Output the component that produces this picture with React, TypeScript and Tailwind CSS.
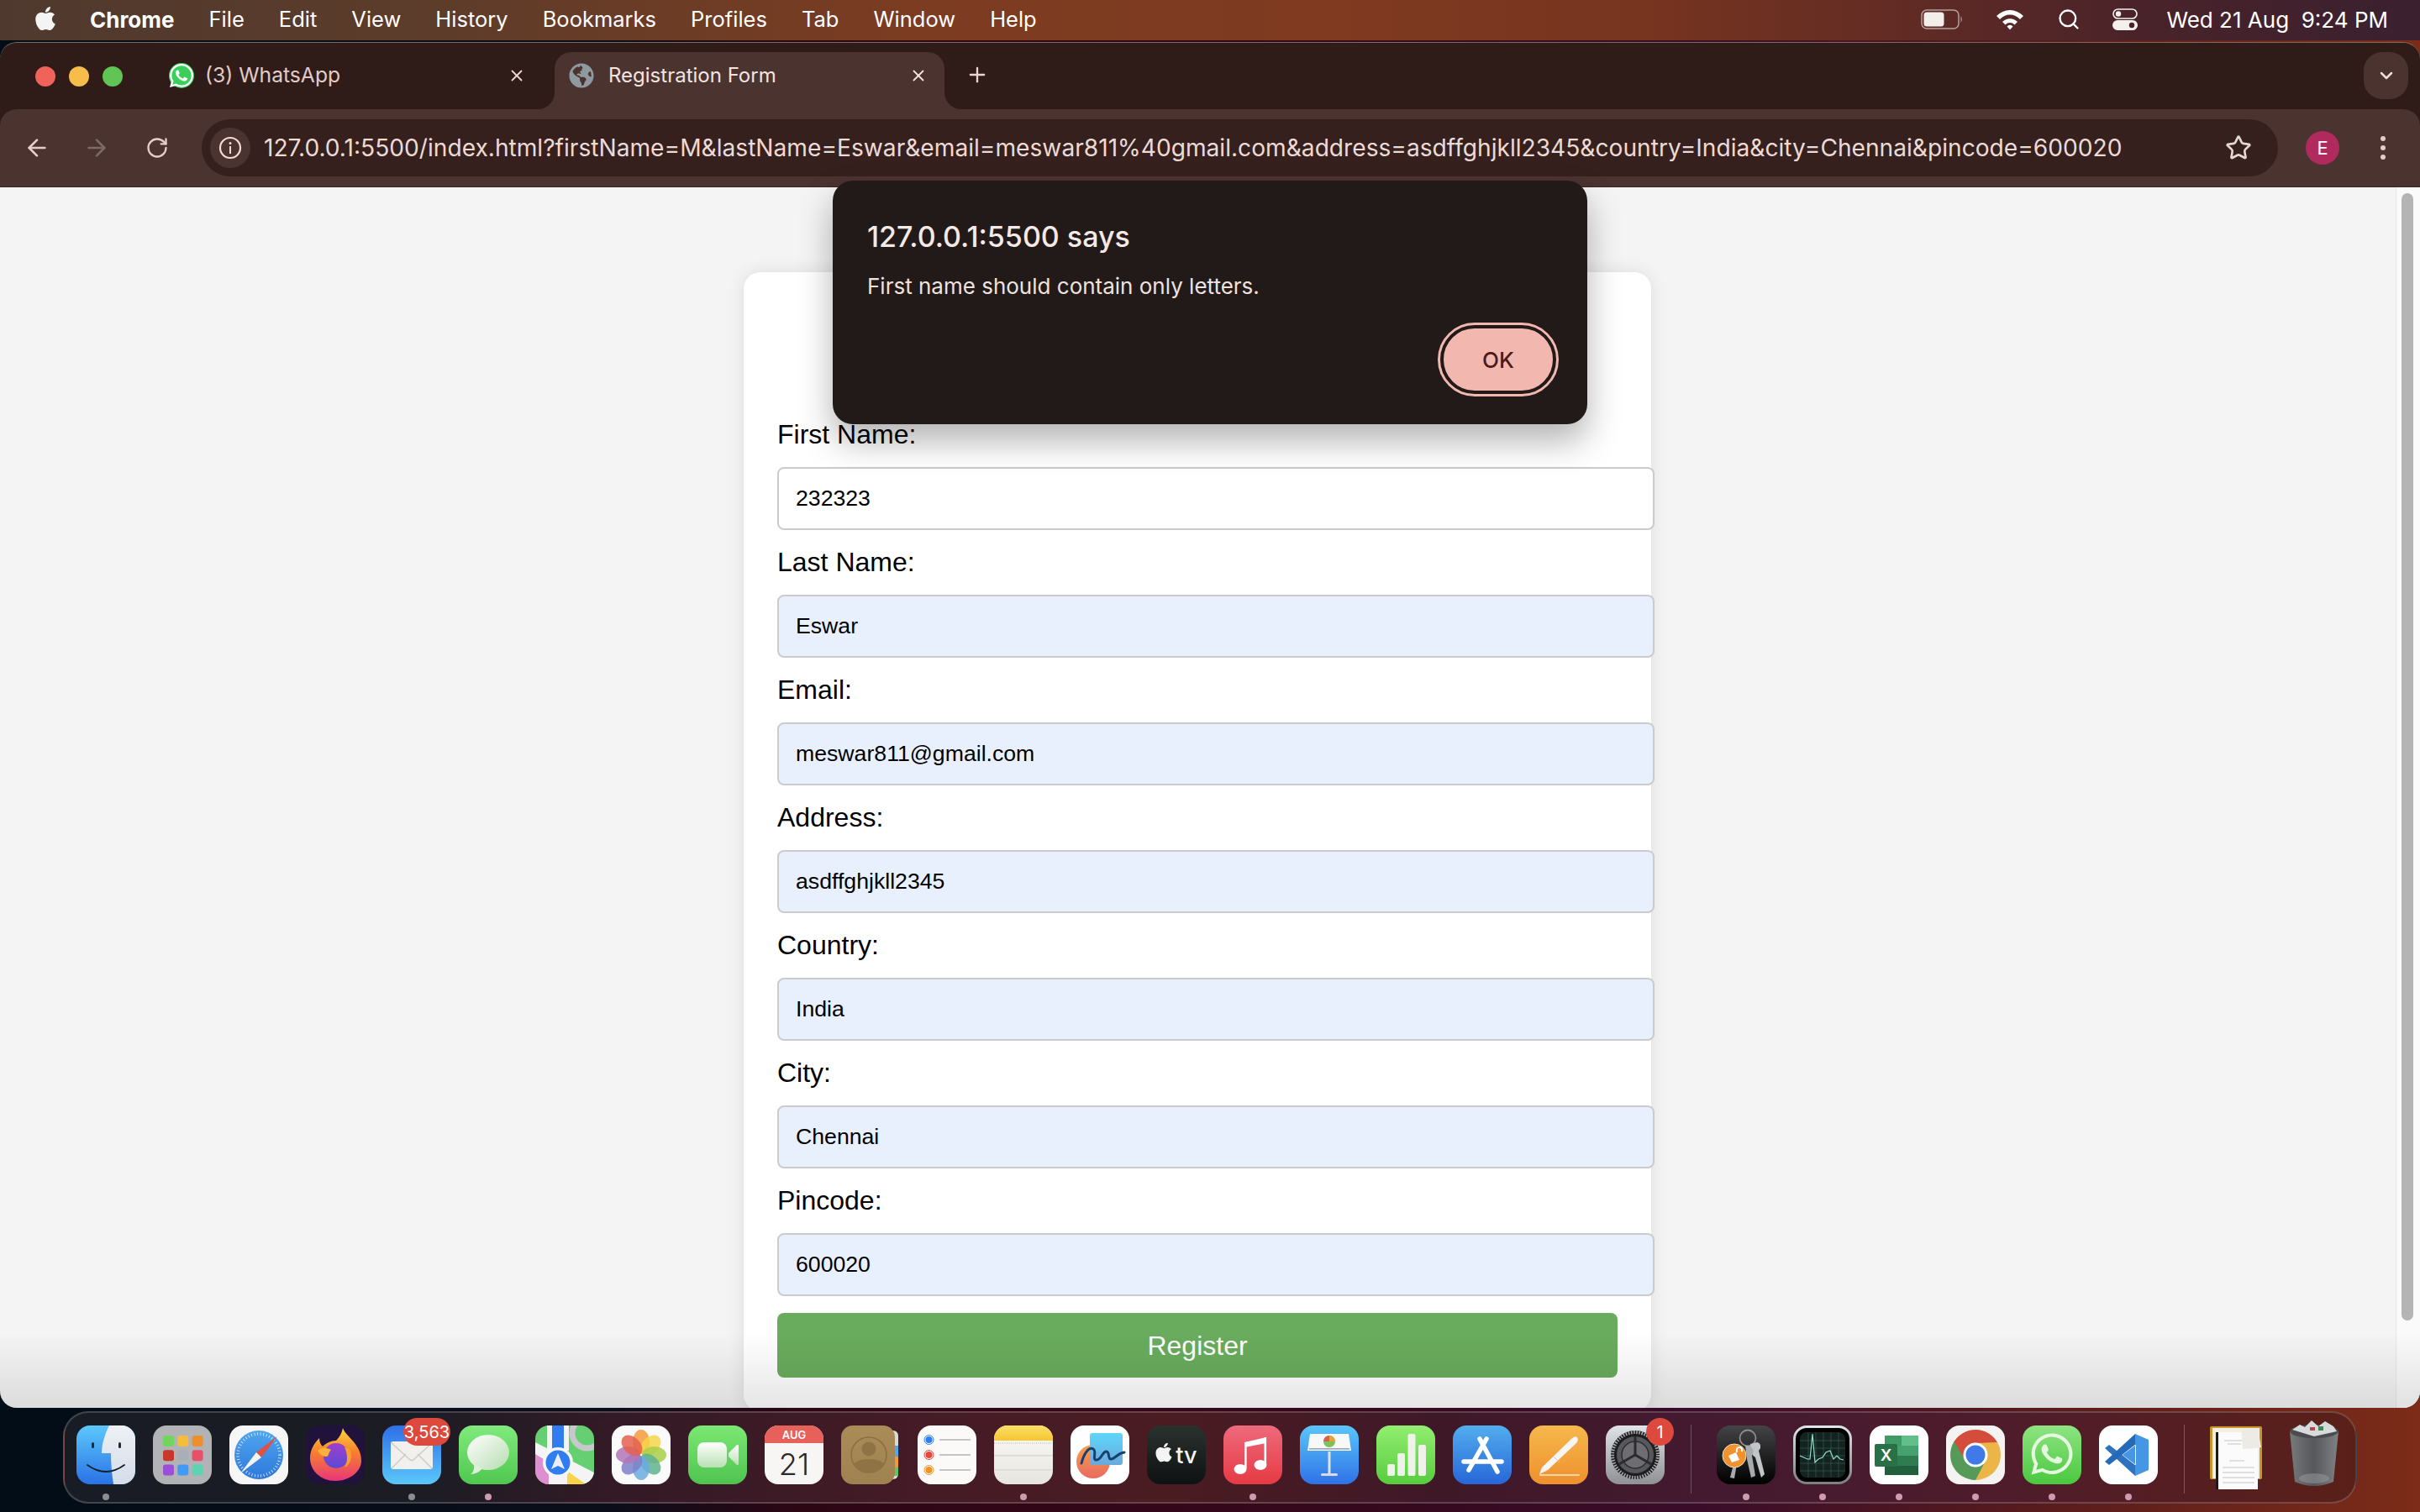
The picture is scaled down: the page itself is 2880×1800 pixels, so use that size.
import React from "react";
import { ArrowLeft, ArrowRight, RotateCw, Star, ChevronDown, Plus, X, Search } from "lucide-react";
import { FaApple, FaWhatsapp, FaGlobeAmericas } from "react-icons/fa";

const SANS = "font-['Inter','Roboto',sans-serif]";

function Ic({ children, defs }: { children: React.ReactNode; defs?: React.ReactNode }) {
  return (
    <svg width="70" height="70" viewBox="0 0 70 70" className="block">
      {defs && <defs>{defs}</defs>}
      {children}
    </svg>
  );
}
const G = ({ id, a, b }: { id: string; a: string; b: string }) => (
  <linearGradient id={id} x1="0" y1="0" x2="0" y2="1">
    <stop offset="0" stopColor={a} />
    <stop offset="1" stopColor={b} />
  </linearGradient>
);
const Base = ({ fill }: { fill: string }) => <rect width="70" height="70" rx="16" fill={fill} />;

const Finder = () => (
  <Ic defs={<><G id="f1" a="#5cc8fb" b="#2a72e6" /><G id="f2" a="#eef0f4" b="#d4ddea" /><clipPath id="fc"><rect width="70" height="70" rx="16" /></clipPath></>}>
    <g clipPath="url(#fc)">
      <rect width="70" height="70" fill="url(#f1)" />
      <path d="M39 0 C34 10 30 22 30 33 H41 C41 45 42 58 44 70 H70 V0 Z" fill="url(#f2)" />
    </g>
    <rect x="18" y="20" width="3" height="7" rx="1.5" fill="#1c2a3a" />
    <rect x="50" y="20" width="3" height="7" rx="1.5" fill="#1c2a3a" />
    <path d="M13 47 Q35 63 57 47" fill="none" stroke="#15202c" strokeWidth="1.8" strokeLinecap="round" />
  </Ic>
);
const Launchpad = () => {
  const c = ["#70d65c", "#f6bd3a", "#ec8f2c", "#c9372c", "#a9b0b5", "#e8506a", "#9a4fd6", "#3f9bf5", "#5fd2b0"];
  return (
    <Ic>
      <Base fill="#b2b3b6" />
      {c.map((f, i) => (
        <rect key={i} x={12 + (i % 3) * 17.3} y={12 + Math.floor(i / 3) * 17.3} width="13" height="13" rx="3" fill={f} />
      ))}
    </Ic>
  );
};
const Safari = () => (
  <Ic defs={<G id="s1" a="#4fa6ee" b="#2f78dc" />}>
    <Base fill="#f6f6f6" />
    <circle cx="35" cy="35" r="29" fill="url(#s1)" />
    <circle cx="35" cy="35" r="25" fill="none" stroke="#e8f2fc" strokeWidth="3.5" strokeDasharray="0.8 2.8" />
    <polygon points="57,13 38,38 32,32" fill="#e2503f" />
    <polygon points="13,57 32,32 38,38" fill="#f4f4f4" />
  </Ic>
);
const Firefox = () => (
  <Ic defs={<><linearGradient id="ff1" x1="0.4" y1="0" x2="0.4" y2="1"><stop offset="0" stopColor="#ffd43a" /><stop offset="0.45" stopColor="#f7812c" /><stop offset="1" stopColor="#e8357a" /></linearGradient><G id="ff2" a="#a03fcf" b="#5a4ad4" /></>}>
    <Base fill="#20123a" />
    <path d="M35 66 C18 66 5 54 5 39 C5 30 9 22 16 15 C16 20 18 23 20 25 C24 21 30 18 36 18 C40 14 43 9 44 3 C46 10 56 16 62 27 C66 34 66 40 66 42 C66 55 52 66 35 66 Z" fill="url(#ff1)" />
    <circle cx="36" cy="36" r="15" fill="url(#ff2)" />
    <path d="M14 30 C20 25 26 27 30 29 C26 33 28 37 24 37 C19 37 16 33 14 30 Z" fill="#fbb23a" />
    <path d="M52 28 C56 35 54 46 46 50 C50 43 50 34 46 26 Z" fill="#f9a02c" />
  </Ic>
);
const Mail = () => (
  <Ic defs={<G id="m1" a="#2f6fe8" b="#5ac8fa" />}>
    <Base fill="url(#m1)" />
    <rect x="10" y="19" width="50" height="33" rx="3" fill="#f2f0ec" />
    <path d="M10 20 L32 40 Q35 43 38 40 L60 20 M11 51 L28 34 M59 51 L42 34" fill="none" stroke="#c9c9c6" strokeWidth="1.3" />
  </Ic>
);
const Messages = () => (
  <Ic defs={<><G id="ms" a="#80ea7c" b="#4fc750" /><linearGradient id="ms2" x1="0" y1="0" x2="1" y2="1"><stop offset="0" stopColor="#ffffff" /><stop offset="1" stopColor="#b6ddb0" /></linearGradient></>}>
    <Base fill="url(#ms)" />
    <ellipse cx="35" cy="32" rx="25" ry="21" fill="url(#ms2)" />
    <path d="M18 46 C19 52 17 56 14 58 C20 58 25 55 28 51 Z" fill="#dff0da" />
  </Ic>
);
const Maps = () => (
  <Ic defs={<clipPath id="mp"><rect width="70" height="70" rx="16" /></clipPath>}>
    <g clipPath="url(#mp)">
      <rect width="70" height="70" fill="#66cf72" />
      <polygon points="0,30 0,70 18,70 18,42" fill="#de8fcf" />
      <polygon points="0,20 70,56 70,70 60,70 0,34" fill="#f4f4f4" />
      <rect x="16" y="42" width="22" height="28" fill="#f4f4f4" />
      <polygon points="38,54 60,70 38,70" fill="#f8d44a" />
      <circle cx="62" cy="9" r="18" fill="none" stroke="#c6c8ca" strokeWidth="7" />
      <rect x="14" y="0" width="26" height="30" fill="#f4f4f4" />
      <rect x="20" y="0" width="14" height="32" fill="#2f7df0" />
      <circle cx="27" cy="44" r="18" fill="#f4f6f8" />
      <circle cx="27" cy="44" r="14.5" fill="#2f7df0" />
      <polygon points="27,33 35,52 27,48 19,52" fill="#ebeef2" />
    </g>
  </Ic>
);
const Photos = () => {
  const c = ["#f39a3c", "#f5d64a", "#a8cf4a", "#5fb28f", "#6aaae0", "#7e80c8", "#b273b8", "#e4604c"];
  return (
    <Ic>
      <Base fill="#fafafa" />
      {c.map((f, i) => (
        <ellipse key={i} cx="35" cy="19.5" rx="10" ry="14.5" fill={f} opacity="0.85" transform={`rotate(${i * 45} 35 35)`} />
      ))}
      <circle cx="35" cy="35" r="1.2" fill="#fff" />
    </Ic>
  );
};
const FaceTime = () => (
  <Ic defs={<><G id="ft" a="#7ce874" b="#4ec44e" /><G id="ft2" a="#ffffff" b="#b9e0b4" /></>}>
    <Base fill="url(#ft)" />
    <rect x="11" y="20" width="35" height="30" rx="8" fill="url(#ft2)" />
    <path d="M48 33 L58 23 Q60 22 60 25 V45 Q60 48 58 47 L48 37 Z" fill="url(#ft2)" />
  </Ic>
);
const CalendarI = () => (
  <Ic defs={<clipPath id="ca"><rect width="70" height="70" rx="16" /></clipPath>}>
    <g clipPath="url(#ca)">
      <rect width="70" height="70" fill="#f7f6f4" />
      <rect width="70" height="21" fill="#e8605a" />
    </g>
    <text x="35" y="16" textAnchor="middle" fontSize="13" fontWeight="600" fill="#fff" fontFamily="Inter, sans-serif">AUG</text>
    <text x="35" y="59" textAnchor="middle" fontSize="36" fontWeight="300" fill="#2a2a2a" fontFamily="Inter, sans-serif">21</text>
  </Ic>
);
const Contacts = () => (
  <Ic defs={<G id="co" a="#a98c58" b="#a08250" />}>
    <rect x="56" y="6" width="12" height="58" rx="6" fill="#d9d9d6" />
    <rect x="62" y="24" width="6" height="13" fill="#4fa5ee" />
    <rect x="62" y="37" width="6" height="13" fill="#ef9a33" />
    <rect x="62" y="50" width="6" height="10" fill="#62c466" />
    <rect width="64" height="70" rx="14" fill="url(#co)" />
    <circle cx="33" cy="35" r="21" fill="none" stroke="#8a6f42" strokeWidth="1.6" />
    <circle cx="33" cy="28" r="8.5" fill="#8f7345" />
    <path d="M15 46 C20 38 46 38 51 46 C46 53 40 56 33 56 C26 56 20 53 15 46 Z" fill="#8f7345" />
  </Ic>
);
const Reminders = () => (
  <Ic>
    <Base fill="#fbfaf8" />
    {[["#2f7df0", 17], ["#e8483c", 35], ["#ee9426", 53]].map(([c, y]) => (
      <g key={String(y)}>
        <circle cx="13.5" cy={y as number} r="5.5" fill="none" stroke={c as string} strokeWidth="1" />
        <circle cx="13.5" cy={y as number} r="4" fill={c as string} />
        <rect x="26" y={(y as number) - 0.8} width="37" height="1.6" fill="#b8b8ba" />
      </g>
    ))}
  </Ic>
);
const Notes = () => (
  <Ic defs={<><clipPath id="no"><rect width="70" height="70" rx="16" /></clipPath><G id="no1" a="#fadf68" b="#f6c630" /><G id="no2" a="#fbfaf6" b="#e6e5e0" /></>}>
    <g clipPath="url(#no)">
      <rect width="70" height="70" fill="url(#no2)" />
      <rect width="70" height="18" fill="url(#no1)" />
      <line x1="0" y1="21" x2="70" y2="21" stroke="#c7c6c0" strokeWidth="1.5" strokeDasharray="1 1.5" />
      <rect y="35" width="70" height="1.6" fill="#dcdbd6" />
      <rect y="52" width="70" height="1.6" fill="#dcdbd6" />
    </g>
  </Ic>
);
const Freeform = () => (
  <Ic defs={<><G id="fr1" a="#f3a14e" b="#ea6a60" /><G id="fr2" a="#5fd6fb" b="#6aa9dc" /></>}>
    <Base fill="#fff" />
    <circle cx="27" cy="43" r="20" fill="url(#fr1)" />
    <rect x="23" y="9" width="39" height="38" rx="3" fill="url(#fr2)" />
    <path d="M13 45 C16 33 22 25 27 28 C32 31 25 41 31 41 C37 41 38 30 43 31 C47 32 44 40 48 40 C53 40 56 33 64 32" fill="none" stroke="#17406e" strokeWidth="3" strokeLinecap="round" />
  </Ic>
);
const TV = () => (
  <Ic defs={<G id="tv" a="#2a322e" b="#0e1212" />}>
    <Base fill="url(#tv)" />
    <foreignObject x="7" y="19" width="28" height="30">
      <FaApple size={26} color="#f4f4f4" />
    </foreignObject>
    <text x="47" y="45" textAnchor="middle" fontSize="27" fontWeight="500" fill="#f4f4f4" fontFamily="Inter, sans-serif">tv</text>
  </Ic>
);
const Music = () => (
  <Ic defs={<G id="mu" a="#ee6a7c" b="#e63a44" />}>
    <Base fill="url(#mu)" />
    <polygon points="25,20 51,14 51,21 25,26" fill="#fff" />
    <rect x="25" y="20" width="2.6" height="31" fill="#fff" />
    <rect x="48.5" y="14" width="2.6" height="32" fill="#fff" />
    <ellipse cx="20" cy="52" rx="7.5" ry="6" fill="#fff" />
    <ellipse cx="44" cy="47" rx="7.5" ry="6" fill="#fff" />
  </Ic>
);
const Keynote = () => (
  <Ic defs={<G id="kn" a="#5ac6fa" b="#2f72e8" />}>
    <Base fill="url(#kn)" />
    <polygon points="12,10 58,10 61,30 9,30" fill="#f8f8f8" />
    <rect x="11" y="27" width="48" height="1.6" fill="#9ea4ac" />
    <circle cx="35" cy="19" r="7" fill="#7bc25a" />
    <path d="M35 19 V12 A7 7 0 0 1 42 19 Z" fill="#e8a03c" />
    <path d="M35 19 V12 A7 7 0 0 0 28 19 Z" fill="#d8604c" />
    <rect x="33.5" y="31" width="3" height="26" fill="#dfe2e6" />
    <rect x="25" y="57" width="20" height="3" rx="1.5" fill="#d8dce0" />
  </Ic>
);
const Numbers = () => (
  <Ic defs={<G id="nu" a="#92ee70" b="#58cc3e" />}>
    <Base fill="url(#nu)" />
    <rect x="13" y="46" width="9" height="14" rx="2" fill="#eef2ea" />
    <rect x="25" y="33" width="9" height="27" rx="2" fill="#eef2ea" />
    <rect x="37.5" y="10" width="9" height="50" rx="2" fill="#eef2ea" />
    <rect x="50" y="23" width="9" height="37" rx="2" fill="#eef2ea" />
  </Ic>
);
const AppStore = () => (
  <Ic defs={<G id="as" a="#52aeee" b="#2766d8" />}>
    <Base fill="url(#as)" />
    <g stroke="#fff" strokeWidth="5.5" strokeLinecap="round">
      <line x1="32" y1="16" x2="53" y2="55" />
      <line x1="40" y1="16" x2="19" y2="53" />
      <line x1="13" y1="43" x2="58" y2="43" />
    </g>
  </Ic>
);
const Pages = () => (
  <Ic defs={<G id="pg" a="#f6b84c" b="#ee902e" />}>
    <Base fill="url(#pg)" />
    <path d="M12 58 L15 50 L50 16 Q54 12 57 14 Q59 17 56 21 L22 53 Z" fill="#f8f6f2" />
    <path d="M30 38 L36 44" stroke="#cfcac2" strokeWidth="1" />
    <rect x="12" y="58" width="48" height="2" rx="1" fill="#f8d6a6" />
  </Ic>
);
const Settings = () => (
  <Ic defs={<G id="se" a="#dfe4e8" b="#8f9194" />}>
    <Base fill="url(#se)" />
    <circle cx="35" cy="35" r="29" fill="#1e1e20" />
    <circle cx="35" cy="35" r="27" fill="none" stroke="#a8aaae" strokeWidth="4" strokeDasharray="1.6 1.6" />
    <circle cx="35" cy="35" r="22" fill="#58585c" />
    <circle cx="35" cy="35" r="16" fill="#6e6e72" stroke="#2c2c2e" strokeWidth="1.5" />
    <g stroke="#2c2c2e" strokeWidth="3">
      <line x1="35" y1="35" x2="35" y2="13" />
      <line x1="35" y1="35" x2="16" y2="46" />
      <line x1="35" y1="35" x2="54" y2="46" />
    </g>
  </Ic>
);
const Keychain = () => (
  <Ic defs={<G id="ke" a="#444446" b="#000000" />}>
    <Base fill="url(#ke)" />
    <circle cx="37" cy="15" r="9.5" fill="none" stroke="#8e8e8e" strokeWidth="1.8" />
    <path d="M40 22 L48 20 Q53 21 52 27 L50 30 L57 58 L53 62 L46 38 Q40 34 40 27 Z" fill="#c2c5c8" />
    <path d="M34 24 L40 24 Q46 30 42 36 L46 60 L41 62 L36 40 Z" fill="#a8abae" />
    <path d="M20 46 L24 46 L21 63 L16 62 Z" fill="#a8abae" />
    <circle cx="21" cy="36" r="14" fill="#f0922e" stroke="#e8e0d8" strokeWidth="1" />
    <path d="M14 36 L23 32 L27 41 L18 44 Z" fill="#fff" />
    <path d="M24 32 Q23 26 27 26 Q31 26 30 31" fill="none" stroke="#fff" strokeWidth="2" />
  </Ic>
);
const Activity = () => (
  <Ic defs={<G id="am" a="#dfe6ea" b="#7c7e80" />}>
    <Base fill="url(#am)" />
    <rect x="3" y="3" width="64" height="64" rx="13" fill="#000" />
    <rect x="8" y="8" width="54" height="54" rx="8" fill="#13231f" />
    <g stroke="#3d5a52" strokeWidth="0.7">
      {[18, 27, 36, 45, 54].map((p) => (
        <React.Fragment key={p}>
          <line x1={p} y1="8" x2={p} y2="62" />
          <line x1="8" y1={p} x2="62" y2={p} />
        </React.Fragment>
      ))}
    </g>
    <polyline points="8,36 17,40 20,40 23,10 26,44 30,40 35,38 39,32 44,30 48,40 52,36 56,40 60,41" fill="none" stroke="#8fe0cc" strokeWidth="1.2" />
  </Ic>
);
const Excel = () => (
  <Ic>
    <Base fill="#fff" />
    <rect x="18" y="12" width="20" height="12" fill="#3f9a67" />
    <rect x="38" y="12" width="20" height="12" fill="#60bf8a" />
    <rect x="18" y="24" width="40" height="12" fill="#46a06f" />
    <rect x="18" y="36" width="40" height="12" fill="#2f7c50" />
    <rect x="18" y="48" width="40" height="11" fill="#225f3c" />
    <rect x="6" y="22" width="27" height="27" rx="2" fill="#2a7046" />
    <text x="19.5" y="42" textAnchor="middle" fontSize="19" fontWeight="600" fill="#fff" fontFamily="Inter, sans-serif">X</text>
  </Ic>
);
const ChromeI = () => {
  const w = "M35 21 L61.5 21 A30 30 0 0 0 9 20 L22.9 42 A14 14 0 0 1 35 21 Z";
  return (
    <Ic>
      <Base fill="#f5f2f2" />
      <path d={w} fill="#d44d3c" />
      <path d={w} fill="#ecb548" transform="rotate(120 35 35)" />
      <path d={w} fill="#559a58" transform="rotate(240 35 35)" />
      <circle cx="35" cy="35" r="14.5" fill="#fff" />
      <circle cx="35" cy="35" r="11.5" fill="#3f7ae8" />
    </Ic>
  );
};
const WA = () => (
  <Ic defs={<G id="wa" a="#8ee482" b="#4ac83e" />}>
    <Base fill="url(#wa)" />
    <foreignObject x="7" y="6" width="56" height="58">
      <FaWhatsapp size={56} color="#e6f7e0" />
    </foreignObject>
  </Ic>
);
const VS = () => (
  <Ic>
    <Base fill="#fff" />
    <polygon points="7,27 12,23 48,51 43,60" fill="#2e72c0" />
    <polygon points="7,43 12,47 48,19 43,10" fill="#256ab8" />
    <path d="M43 10 L59 17 V53 L43 60 Z M44 23 L28 35 L44 47 Z" fillRule="evenodd" fill="#4696e6" />
  </Ic>
);
const Docs = () => (
  <svg width="66" height="80" viewBox="0 0 66 80" className="block">
    <rect x="1" y="3" width="62" height="63" rx="2" fill="#c9962e" />
    <rect x="4" y="5" width="56" height="60" fill="#f3efe2" />
    <rect x="8" y="10" width="50" height="68" fill="#fbfbfb" />
    <rect x="8" y="10" width="3" height="68" fill="#1a1a1a" />
    <g stroke="#b8b8b8" strokeWidth="0.8">
      <line x1="18" y1="20" x2="40" y2="20" /><line x1="22" y1="24" x2="38" y2="24" />
      <line x1="24" y1="44" x2="42" y2="44" /><line x1="16" y1="52" x2="54" y2="52" />
      <line x1="16" y1="58" x2="54" y2="58" /><line x1="16" y1="64" x2="54" y2="64" /><line x1="16" y1="70" x2="54" y2="70" />
    </g>
    <path d="M38 6 L58 6 L62 28 Q50 30 40 30 Z" fill="#ecebe6" />
  </svg>
);
const Trash = () => (
  <svg width="62" height="82" viewBox="0 0 62 82" className="block">
    <defs>
      <linearGradient id="tr" x1="0" y1="0" x2="1" y2="0">
        <stop offset="0" stopColor="#77797c" /><stop offset="0.5" stopColor="#55575a" /><stop offset="1" stopColor="#808285" />
      </linearGradient>
    </defs>
    <path d="M2 14 L60 14 L54 74 Q31 84 8 74 Z" fill="url(#tr)" />
    <ellipse cx="31" cy="14" rx="29" ry="8" fill="#4a4c4f" />
    <path d="M5 12 L14 6 L20 9 L28 1 L36 8 L44 2 L54 8 L58 14 L31 20 Z" fill="#d8dadc" />
    <rect x="36" y="8" width="6" height="5" fill="#3f8a54" />
    <rect x="26" y="9" width="6" height="4" fill="#b04848" />
    <ellipse cx="31" cy="70" rx="18" ry="6" fill="#9a9ca0" opacity="0.5" />
  </svg>
);

type DockApp = { c: React.FC; on?: boolean; pink?: boolean; badge?: React.ReactNode };
const apps: DockApp[] = [
  { c: Finder, on: true },
  { c: Launchpad },
  { c: Safari },
  { c: Firefox },
  {
    c: Mail,
    on: true,
    badge: (
      <span className="absolute left-[25px] top-[-9px] flex h-[33px] w-[56px] items-center justify-center rounded-full bg-[#dd4a3d] text-[20px] text-white font-['Inter',sans-serif]">
        3,563
      </span>
    ),
  },
  { c: Messages, on: true, pink: true },
  { c: Maps },
  { c: Photos },
  { c: FaceTime },
  { c: CalendarI },
  { c: Contacts },
  { c: Reminders },
  { c: Notes, on: true, pink: true },
  { c: Freeform },
  { c: TV },
  { c: Music, on: true, pink: true },
  { c: Keynote },
  { c: Numbers },
  { c: AppStore },
  { c: Pages },
  {
    c: Settings,
    badge: (
      <span className="absolute left-[48px] top-[-9px] flex h-[33px] w-[33px] items-center justify-center rounded-full bg-[#dd4a3d] text-[20px] text-white font-['Inter',sans-serif]">
        1
      </span>
    ),
  },
];
const apps2: DockApp[] = [Keychain, Activity, Excel, ChromeI, WA, VS].map((c) => ({ c, on: true, pink: true }));

function DockItem({ a }: { a: DockApp }) {
  const C = a.c;
  return (
    <div className="flex w-[70px] flex-col items-center gap-[11px]">
      <div className="relative h-[70px] w-[70px]">
        <C />
        {a.badge}
      </div>
      <div className={`h-[8px] w-[8px] rounded-full ${a.on ? (a.pink ? "bg-[#cf9bb0]" : "bg-[#8b8d92]") : "bg-transparent"}`} />
    </div>
  );
}

function Field({ label, value, auto = true }: { label: string; value: string; auto?: boolean }) {
  return (
    <div className="flex h-[152px] flex-col font-['Liberation_Sans',sans-serif]">
      <label className="mt-[1px] h-[37px] text-[32px] leading-[37px] text-black">{label}</label>
      <input
        readOnly
        value={value}
        className={`mt-[20px] h-[75px] w-[1044px] max-w-none shrink-0 rounded-[8px] border-2 border-[#cbcbcb] px-[20px] text-[26.67px] text-black outline-none ${auto ? "bg-[#e8f0fe]" : "bg-white"}`}
      />
    </div>
  );
}

function MenuBar() {
  const items = ["File", "Edit", "View", "History", "Bookmarks", "Profiles", "Tab", "Window", "Help"];
  return (
    <div className={`flex h-[48px] shrink-0 items-center bg-[linear-gradient(90deg,#4f392e_0%,#5d3c2a_18%,#7c3c21_38%,#7f3a20_55%,#77341f_68%,#632c24_78%,#4a2329_88%,#3a2030_100%)] pb-[2px] pl-[38px] pr-[38px] text-[25.5px] text-white ${SANS}`}>
      <FaApple size={32} className="mb-[3px] text-[#f4f4f4]" />
      <span className="ml-[37px] text-[26px] font-bold">Chrome</span>
      <div className="ml-[41px] flex gap-[41px] font-normal">
        {items.map((i) => (
          <span key={i}>{i}</span>
        ))}
      </div>
      <div className="ml-auto flex items-center text-[26px]">
        <svg width="50" height="24" viewBox="0 0 50 24">
          <rect x="1" y="1" width="44" height="22" rx="6" fill="none" stroke="#b7a09a" strokeWidth="1.5" />
          <rect x="3.5" y="3.5" width="24" height="17" rx="3.5" fill="#f3eeea" />
          <path d="M47.5 8 Q50 12 47.5 16 Z" fill="#b7a09a" />
        </svg>
        <svg width="34" height="26" viewBox="0 0 34 26" className="ml-[39px]">
          <path d="M1 9 A22 22 0 0 1 33 9 L29 13 A16 16 0 0 0 5 13 Z" fill="#fff" />
          <path d="M8 16 A12.5 12.5 0 0 1 26 16 L22.5 19.5 A7.5 7.5 0 0 0 11.5 19.5 Z" fill="#fff" />
          <path d="M13.5 21.5 A4.5 4.5 0 0 1 20.5 21.5 L17 25.5 Z" fill="#fff" />
        </svg>
        <Search size={28} strokeWidth={2} className="ml-[39px] text-white" />
        <svg width="30" height="26" viewBox="0 0 30 26" className="ml-[38px]">
          <rect x="1" y="1" width="28" height="11" rx="5.5" fill="none" stroke="#f4f0ee" strokeWidth="1.6" />
          <circle cx="7" cy="6.5" r="3.2" fill="#f4f0ee" />
          <rect x="0" y="14" width="30" height="12" rx="6" fill="#f4f0ee" />
          <circle cx="23" cy="20" r="3.2" fill="#4a2329" />
        </svg>
        <span className="ml-[34px] whitespace-pre">Wed 21 Aug  9:24 PM</span>
      </div>
    </div>
  );
}

function TabStrip() {
  return (
    <div className="relative flex h-[79px] shrink-0 items-end">
      <div className="ml-[42px] mb-[27px] flex gap-[16px]">
        <div className="h-[24px] w-[24px] rounded-full bg-[#f0635a]" />
        <div className="h-[24px] w-[24px] rounded-full bg-[#f6bd4a]" />
        <div className="h-[24px] w-[24px] rounded-full bg-[#60c554]" />
      </div>
      <div className="ml-[55px] mb-[25px] flex h-[30px] w-[454px] items-center">
        <div className="relative flex h-[30px] w-[30px] items-center justify-center rounded-full bg-[#39d05a]">
          <FaWhatsapp size={32} className="absolute text-white" />
        </div>
        <span className="ml-[13px] text-[24.7px] text-[#e3cbc6]">(3) WhatsApp</span>
        <X size={22} strokeWidth={2} className="ml-auto mr-[29px] text-[#ecd5d0]" />
      </div>
      <div className="relative ml-[5px] flex h-[68px] w-[464px] items-center rounded-t-[20px] bg-[#4b3330] pb-[12px] pl-[17px] pr-[20px]">
        <div className="absolute bottom-0 left-[-20px] h-[20px] w-[20px] bg-[radial-gradient(circle_at_0_0,#2f1c18_19.5px,#4b3330_20.5px)]" />
        <div className="absolute bottom-0 right-[-20px] h-[20px] w-[20px] bg-[radial-gradient(circle_at_100%_0,#2f1c18_19.5px,#4b3330_20.5px)]" />
        <FaGlobeAmericas size={30} className="text-[#8f9aa0]" />
        <span className="ml-[17px] text-[24px] text-[#f3e4e0]">Registration Form</span>
        <X size={22} strokeWidth={2} className="ml-auto text-[#f3e4e0]" />
      </div>
      <Plus size={28} strokeWidth={2} className="mb-[27px] ml-[25px] text-[#ecd5d0]" />
      <div className="ml-auto mb-[12px] mr-[14px] flex h-[56px] w-[53px] items-center justify-center rounded-[22px] bg-[#4b3330]">
        <ChevronDown size={24} strokeWidth={2.5} className="text-[#f0dcd8]" />
      </div>
    </div>
  );
}

function Toolbar() {
  return (
    <div className="flex h-[93px] shrink-0 items-center rounded-t-[20px] border-b border-b-[#3b2724] bg-[#4b3330]">
      <ArrowLeft size={32} strokeWidth={2} className="ml-[28px] text-[#e6cdc8]" />
      <ArrowRight size={32} strokeWidth={2} className="ml-[39px] text-[#7e6a65]" />
      <RotateCw size={28} strokeWidth={2} className="ml-[42px] text-[#e6cdc8]" />
      <div className="ml-[39px] flex h-[68px] w-[2471px] items-center rounded-full bg-[#35201d] pl-[10px]">
        <div className="flex h-[48px] w-[48px] items-center justify-center rounded-full bg-[#4b3330]">
          <svg width="28" height="28" viewBox="0 0 28 28">
            <circle cx="14" cy="14" r="12" fill="none" stroke="#f0dcd8" strokeWidth="2.2" />
            <circle cx="14" cy="8.5" r="1.5" fill="#f0dcd8" />
            <rect x="13" y="12" width="2" height="9" fill="#f0dcd8" />
          </svg>
        </div>
        <span className="ml-[16px] whitespace-nowrap text-[28.15px] text-[#ecdad6]">
          127.0.0.1:5500/index.html?firstName=M&amp;lastName=Eswar&amp;email=meswar811%40gmail.com&amp;address=asdffghjkll2345&amp;country=India&amp;city=Chennai&amp;pincode=600020
        </span>
        <Star size={32} strokeWidth={2} className="ml-auto mr-[31px] text-[#e6d6d2]" />
      </div>
      <div className="ml-[33px] flex h-[40px] w-[40px] items-center justify-center rounded-full bg-[#b02a5e] text-[22px] text-white">E</div>
      <div className="ml-[49px] flex flex-col gap-[5px]">
        <div className="h-[6px] w-[6px] rounded-full bg-[#e6cdc8]" />
        <div className="h-[6px] w-[6px] rounded-full bg-[#e6cdc8]" />
        <div className="h-[6px] w-[6px] rounded-full bg-[#e6cdc8]" />
      </div>
    </div>
  );
}

export default function App() {
  const fields: [string, string, boolean][] = [
    ["First Name:", "232323", false],
    ["Last Name:", "Eswar", true],
    ["Email:", "meswar811@gmail.com", true],
    ["Address:", "asdffghjkll2345", true],
    ["Country:", "India", true],
    ["City:", "Chennai", true],
    ["Pincode:", "600020", true],
  ];
  return (
    <div className="flex h-[1800px] w-[2880px] flex-col overflow-hidden bg-[linear-gradient(90deg,#020d18_0%,#0a0e1a_25%,#2d0614_33%,#36081c_55%,#3a0c2a_70%,#5a1c1c_85%,#7c2c18_100%)]">
      <MenuBar />
      <div className={`relative mt-[2px] flex h-[1626px] shrink-0 flex-col overflow-hidden rounded-[20px] border-t border-t-[#7d6b62] bg-[#2f1c18] ${SANS}`}>
        <TabStrip />
        <Toolbar />
        <div className="relative flex min-h-0 flex-1 bg-[#f4f4f4]">
          <div className="min-w-0 flex-1 overflow-hidden">
            <div className="ml-[885px] mt-[101px] h-[1356px] w-[1080px] rounded-[20px] bg-white px-[40px] pt-[174px] shadow-[0_0_20px_rgba(0,0,0,0.1)]">
              {fields.map(([l, v, a]) => (
                <Field key={l} label={l} value={v} auto={a} />
              ))}
              <button className="mt-[1px] h-[77px] w-[1000px] rounded-[8px] bg-[#69ac5d] text-[32px] text-white font-['Liberation_Sans',sans-serif]">
                Register
              </button>
            </div>
          </div>
          <div className="w-[29px] shrink-0 border-l border-l-[#e6e6e6] bg-[#fafafa] pt-[7px]">
            <div className="ml-[6px] h-[1342px] w-[14px] rounded-full bg-[#b4b4b4]" />
          </div>
          <div className="pointer-events-none absolute inset-x-0 bottom-0 h-[90px] bg-gradient-to-b from-transparent to-black/10" />
        </div>
        <div className="absolute left-[991px] top-[164px] flex h-[290px] w-[898px] flex-col rounded-[24px] bg-[#211a18] pl-[41px] pr-[37px] shadow-[0_20px_40px_rgba(0,0,0,0.3)]">
          <div className="mt-[48px] text-[34px] font-medium leading-[38px] text-[#f4e9e6]">127.0.0.1:5500 says</div>
          <div className="mt-[24px] text-[26px] leading-[32px] text-[#efe2de]">First name should contain only letters.</div>
          <div className="mt-auto mb-[36px] flex justify-end">
            <button className="h-[82px] w-[138px] rounded-full border-[4px] border-[#211a18] bg-[#f2b8b0] text-[26px] font-medium text-[#4d1a14] outline outline-[3px] outline-[#f2b8b0]">
              OK
            </button>
          </div>
        </div>
      </div>
      <div className="mx-[75px] mt-[4px] flex h-[110px] shrink-0 items-start gap-[21px] rounded-[30px] border-2 border-[#ffffff2e] bg-[linear-gradient(90deg,#181c24_0%,#1b1c24_15%,#331a26_24%,#451b26_38%,#4a1c22_48%,#3f1828_60%,#431a30_72%,#4f1c2b_85%,#5a2018_100%)] pl-[14px] pt-[15px]">
        {apps.map((a, i) => (
          <DockItem key={i} a={a} />
        ))}
        <div className="mx-[9.5px] mt-[-1px] h-[82px] w-px bg-[#ffffff40]" />
        {apps2.map((a, i) => (
          <DockItem key={i} a={a} />
        ))}
        <div className="mx-[9.5px] mt-[-1px] h-[82px] w-px bg-[#ffffff40]" />
        <div className="-ml-[1px] -mt-[2px] w-[66px]">
          <Docs />
        </div>
        <div className="ml-[7px] -mt-[7px] w-[62px]">
          <Trash />
        </div>
      </div>
    </div>
  );
}
